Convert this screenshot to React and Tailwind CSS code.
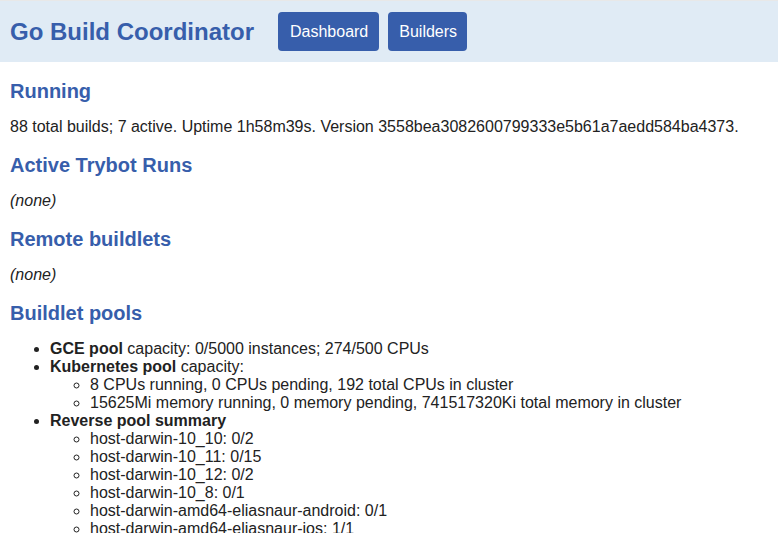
const reverse = [
  "host-darwin-10_10: 0/2",
  "host-darwin-10_11: 0/15",
  "host-darwin-10_12: 0/2",
  "host-darwin-10_8: 0/1",
  "host-darwin-amd64-eliasnaur-android: 0/1",
  "host-darwin-amd64-eliasnaur-ios: 1/1",
];

const Heading = ({ children, first }) => (
  <h2
    className={`${first ? "mt-[17px]" : "mt-[17px]"} mb-[15px] text-[20px] leading-6 font-bold text-[#375eab]`}
  >
    {children}
  </h2>
);

export default function App() {
  return (
    <div className="min-h-screen bg-white text-[16px] leading-[18px] text-[#222] font-['Liberation_Sans',Arial,sans-serif]">
      {/* header */}
      <div className="border-t border-[#e8e8e8] bg-[#e0ebf5] h-[62px] flex items-center px-[10px]">
        <h1 className="text-[24px] font-bold text-[#375eab] leading-none">Go Build Coordinator</h1>
        <nav className="flex gap-[9px] ml-6">
          <a className="h-[39px] pl-3 pr-[11px] flex items-center bg-[#375eab] text-white rounded">Dashboard</a>
          <a className="h-[39px] pl-[11px] pr-[10px] flex items-center bg-[#375eab] text-white rounded">Builders</a>
        </nav>
      </div>

      <div className="px-[10px]">
        <Heading first>Running</Heading>
        <p>88 total builds; 7 active. Uptime 1h58m39s. Version 3558bea3082600799333e5b61a7aedd584ba4373.</p>

        <Heading>Active Trybot Runs</Heading>
        <p className="italic">(none)</p>

        <Heading>Remote buildlets</Heading>
        <p className="italic">(none)</p>

        <Heading>Buildlet pools</Heading>
        <ul className="list-disc pl-10 mt-[3px]">
          <li>
            <b>GCE pool</b> capacity: 0/5000 instances; 274/500 CPUs
          </li>
          <li>
            <b>Kubernetes pool</b> capacity:
            <ul className="list-[circle] pl-10">
              <li>8 CPUs running, 0 CPUs pending, 192 total CPUs in cluster</li>
              <li>15625Mi memory running, 0 memory pending, 741517320Ki total memory in cluster</li>
            </ul>
          </li>
          <li>
            <b>Reverse pool summary</b>
            <ul className="list-[circle] pl-10">
              {reverse.map((r) => (
                <li key={r}>{r}</li>
              ))}
            </ul>
          </li>
        </ul>
      </div>
    </div>
  );
}
